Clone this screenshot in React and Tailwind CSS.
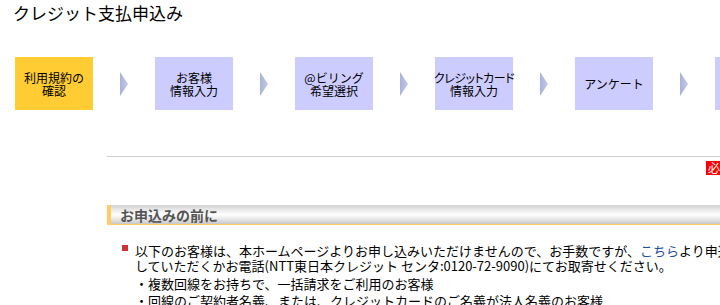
import React from "react";

function Arrow() {
  return (
    <div className="w-[62px] shrink-0 flex justify-center">
      <svg width="8" height="24" viewBox="0 0 8 24">
        <defs>
          <linearGradient id="ag" x1="0" y1="0" x2="1" y2="0">
            <stop offset="0" stopColor="#a9b2da" />
            <stop offset="1" stopColor="#c3c9e8" />
          </linearGradient>
        </defs>
        <polygon points="0,0 8,12 0,24" fill="url(#ag)" />
      </svg>
    </div>
  );
}

function Step({ lines, active, palt }) {
  return (
    <div
      className={
        "w-[78px] h-[53px] shrink-0 flex flex-col items-center justify-center text-[12px] leading-[13px] text-black whitespace-nowrap " +
        (active ? "bg-[#ffcc33]" : "bg-[#ccccff]")
      }
    >
      {lines.map((l, i) => (
        <span
          key={i}
          className={palt && i === 0 ? "[font-feature-settings:'palt'] tracking-[-0.5px]" : ""}
        >
          {l}
        </span>
      ))}
    </div>
  );
}

export default function App() {
  return (
    <div className="w-[720px] h-[305px] overflow-hidden bg-white text-black">
      <div className="font-['Noto_Sans_CJK_JP','Noto_Sans',sans-serif]">
        <h1 className="pl-[13px] pt-[3px] text-[17px] leading-[20px] font-normal">
          クレジット支払申込み
        </h1>

        <div className="mt-[34px] pl-[15px] flex items-center w-[900px]">
          <Step lines={["利用規約の", "確認"]} active />
          <Arrow />
          <Step lines={["お客様", "情報入力"]} />
          <Arrow />
          <Step lines={["@ビリング", "希望選択"]} />
          <Arrow />
          <Step lines={["クレジットカード", "情報入力"]} palt />
          <Arrow />
          <Step lines={["アンケート"]} />
          <Arrow />
          <Step lines={["申込内容", "確認"]} />
        </div>

        <div className="ml-[107px] mt-[46px] w-[627px]">
          <div className="border-t border-[#cccccc]" />
          <div className="mt-[4px] flex justify-end">
            <span className="h-[14px] px-[2px] bg-[#ff0000] text-white text-[12px] leading-[14px]">
              必須
            </span>
          </div>

          <div className="mt-[30px] h-[20px] border-l-[4px] border-b border-[#ffcc66] bg-[linear-gradient(to_bottom,#d2d2d2_0%,#f2f2f2_35%,#ffffff_50%,#ececec_70%,#c8c8c8_100%)] flex items-center pl-[9px]">
            <span className="text-[14px] leading-[18px] font-bold text-[#555555]">
              お申込みの前に
            </span>
          </div>

          <div className="mt-[18px] flex text-[13px] whitespace-nowrap">
            <div className="w-[28px] shrink-0 pl-[15px] pt-[2px]">
              <div className="w-[6px] h-[6px] bg-[#cc3333]" />
            </div>
            <div>
              <p className="leading-[15px]">
                以下のお客様は、本ホームページよりお申し込みいただけませんので、お手数ですが、
                <span className="text-[#1f4f9f]">こちら</span>
                より申込書をご請求
                <br />
                していただくかお電話(NTT東日本クレジット センタ:0120-72-9090)にてお取寄せください。
              </p>
              <ul className="mt-[2px] leading-[17px]">
                <li>・複数回線をお持ちで、一括請求をご利用のお客様</li>
                <li>・回線のご契約者名義、または、クレジットカードのご名義が法人名義のお客様</li>
              </ul>
            </div>
          </div>
        </div>
      </div>
    </div>
  );
}
